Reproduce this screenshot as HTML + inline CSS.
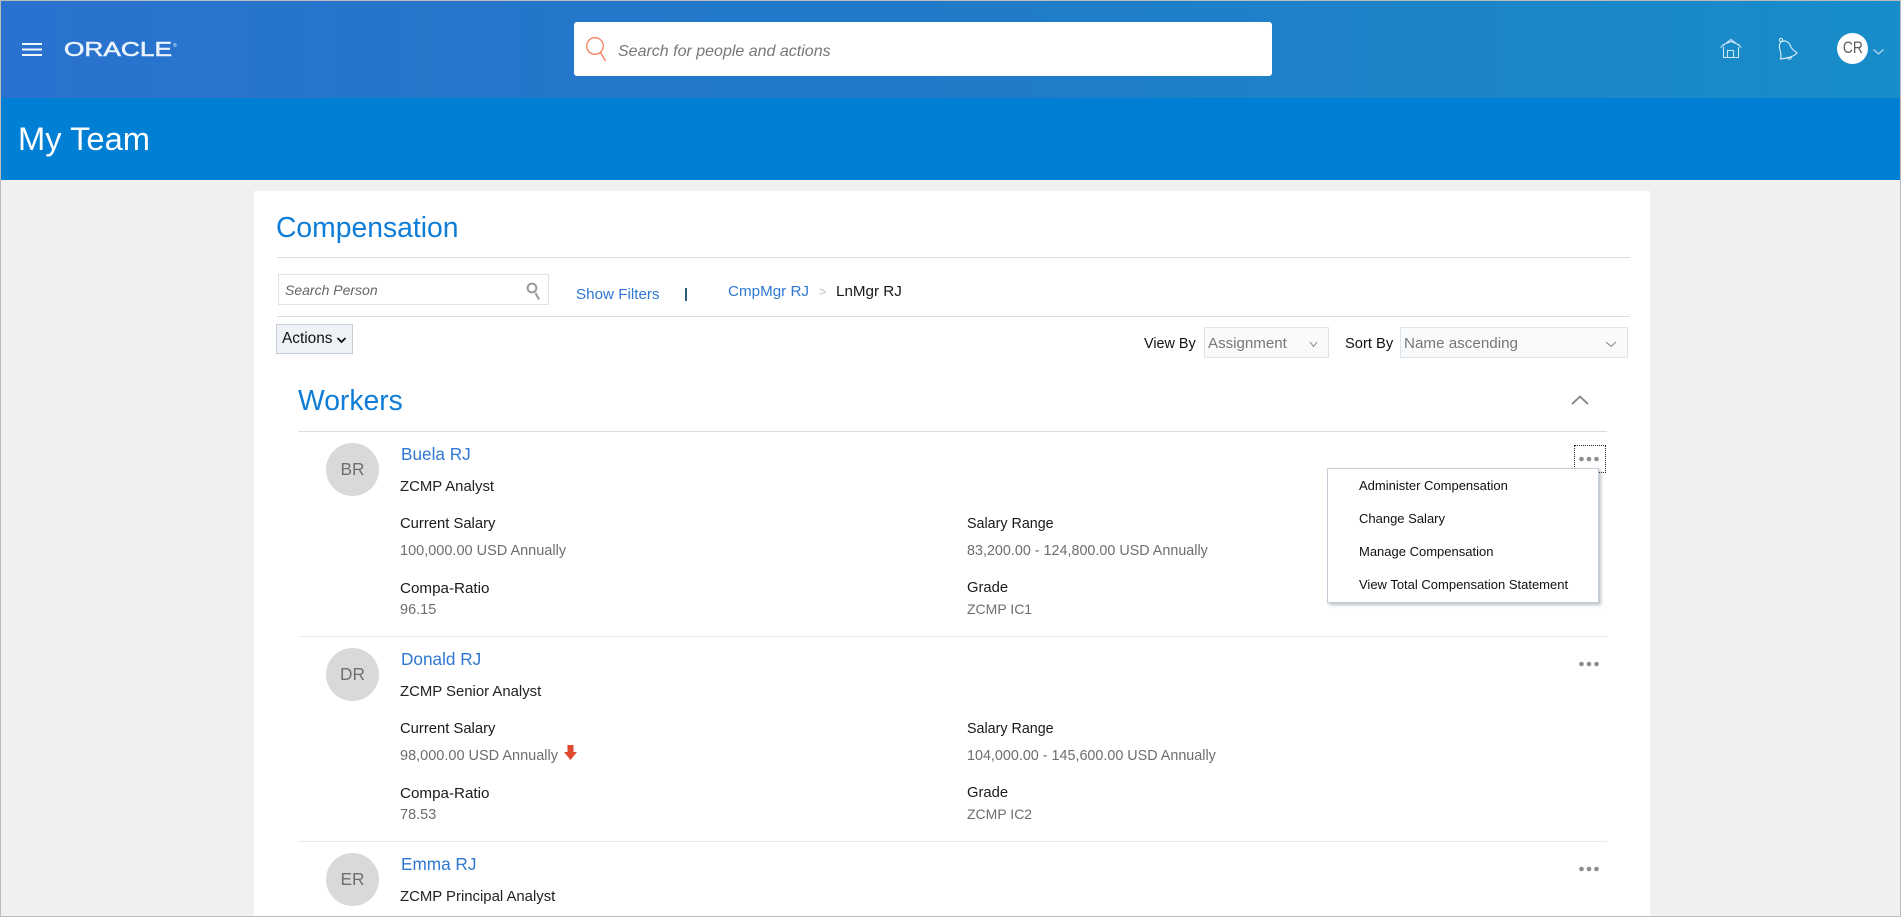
<!DOCTYPE html>
<html lang="en"><head><meta charset="utf-8"><title>My Team</title>
<style>
html,body{margin:0;padding:0;background:#f0f0f0}
body{width:1901px;height:917px;position:relative;overflow:hidden;font-family:"Liberation Sans",sans-serif;color:#222}
.a{position:absolute}
.t{position:absolute;white-space:nowrap;line-height:20px;font-size:14.9px}
.l{color:#1a1a1a;font-size:14.8px}
.v{color:#6e6e6e;font-size:14.5px}
.n{color:#2f78d2;font-size:17.2px}
.h{color:#0f7dd8;font-size:28.3px;line-height:34px}
.hr{position:absolute;height:1px}
.av{position:absolute;left:326px;width:53px;height:53px;border-radius:50%;background:#d9d9d9;color:#6f6f6f;font-size:17.3px;display:flex;align-items:center;justify-content:center}
.m{font-size:13px;color:#111}
.sel{position:absolute;top:327px;height:29px;background:#f8fafc;border:1px solid #dfe4e9;box-sizing:content-box}
</style></head><body>

<div class="a" style="left:0;top:0;width:1901px;height:98px;background:linear-gradient(90deg,#2a72cf 0%,#2179c9 45%,#188dc9 100%)"></div>
<div class="a" style="left:0;top:98px;width:1901px;height:82px;background:#0080d4"></div>
<div class="t" style="left:18px;top:120px;font-size:32.7px;line-height:38px;color:#fff">My Team</div>

<svg class="a" style="left:60px;top:36px" width="122" height="26"><text x="4" y="20" textLength="108" lengthAdjust="spacingAndGlyphs" font-family="Liberation Sans" font-size="20" fill="#eaf3fb" stroke="#eaf3fb" stroke-width=".55">ORACLE</text><text x="113" y="11" font-family="Liberation Sans" font-size="5" fill="#eaf3fb">®</text></svg>

<div class="a" style="left:574px;top:22px;width:698px;height:54px;background:#fff;border-radius:3px"></div>
<div class="t" style="left:618px;top:42px;font-size:16px;font-style:italic;color:#777">Search for people and actions</div>

<div class="a" style="left:1837px;top:33px;width:31px;height:31px;border-radius:50%;background:#fff;color:#5f5f5f;font-size:16.5px;display:flex;align-items:center;justify-content:center"><span style="display:inline-block;transform:scaleX(.84)">CR</span></div>

<div class="a" style="left:254px;top:191px;width:1396px;height:726px;background:#fff"></div>

<div class="t h" style="left:276px;top:210px">Compensation</div>
<div class="hr" style="left:277px;top:257px;width:1353px;background:#d6dde3"></div>

<div class="a" style="left:278px;top:274px;width:269px;height:29px;border:1px solid #e0e4e8;background:#fff;box-sizing:content-box"></div>
<div class="t" style="left:285px;top:280px;font-size:14px;font-style:italic;color:#666">Search Person</div>
<div class="t" style="left:576px;top:285px;font-size:15.2px;color:#2f78d2">Show Filters</div>
<div class="a" style="left:685px;top:288px;width:1.5px;height:13px;background:#2b5a78"></div>
<div class="t" style="left:728px;top:282px;font-size:15.2px;color:#2f78d2">CmpMgr RJ</div>
<div class="t" style="left:819px;top:282px;font-size:13px;color:#c4c4c4">&gt;</div>
<div class="t" style="left:836px;top:282px;font-size:15.2px;color:#1a1a1a">LnMgr RJ</div>
<div class="hr" style="left:277px;top:316px;width:1353px;background:#d6dde3"></div>

<div class="a" style="left:276px;top:324px;width:75px;height:28px;background:#eef2f6;border:1px solid #c4ced7"></div>
<div class="t" style="left:282px;top:329px;font-size:15.4px;color:#111">Actions</div>

<div class="t" style="left:1144px;top:334px;font-size:14.4px;color:#111">View By</div>
<div class="sel" style="left:1204px;width:123px"></div>
<div class="t" style="left:1208px;top:334px;font-size:15.1px;color:#777">Assignment</div>
<div class="t" style="left:1345px;top:334px;font-size:14.7px;color:#111">Sort By</div>
<div class="sel" style="left:1400px;width:226px"></div>
<div class="t" style="left:1404px;top:334px;font-size:15.2px;color:#777">Name ascending</div>

<div class="t h" style="left:298px;top:383px">Workers</div>
<div class="hr" style="left:298px;top:431px;width:1309px;background:#d6dde3"></div>

<div class="av" style="top:443px">BR</div>
<div class="t n" style="left:401px;top:444px">Buela RJ</div>
<div class="t" style="left:400px;top:477px">ZCMP Analyst</div>
<div class="t l" style="left:400px;top:514px">Current Salary</div>
<div class="t v" style="left:400px;top:541px">100,000.00 USD Annually</div>
<div class="t l" style="left:400px;top:579px;font-size:15.2px">Compa-Ratio</div>
<div class="t v" style="left:400px;top:600px">96.15</div>
<div class="t l" style="left:967px;top:514px;font-size:14.3px">Salary Range</div>
<div class="t v" style="left:967px;top:541px;font-size:14.35px">83,200.00 - 124,800.00 USD Annually</div>
<div class="t l" style="left:967px;top:578px">Grade</div>
<div class="t v" style="left:967px;top:599px;font-size:14px">ZCMP IC1</div>
<div class="hr" style="left:298px;top:636px;width:1309px;background:#e8ebee"></div>

<div class="av" style="top:648px">DR</div>
<div class="t n" style="left:401px;top:649px">Donald RJ</div>
<div class="t" style="left:400px;top:682px">ZCMP Senior Analyst</div>
<div class="t l" style="left:400px;top:719px">Current Salary</div>
<div class="t v" style="left:400px;top:746px">98,000.00 USD Annually</div>
<div class="t l" style="left:400px;top:784px;font-size:15.2px">Compa-Ratio</div>
<div class="t v" style="left:400px;top:805px">78.53</div>
<div class="t l" style="left:967px;top:719px;font-size:14.3px">Salary Range</div>
<div class="t v" style="left:967px;top:746px;font-size:14.35px">104,000.00 - 145,600.00 USD Annually</div>
<div class="t l" style="left:967px;top:783px">Grade</div>
<div class="t v" style="left:967px;top:804px;font-size:14px">ZCMP IC2</div>
<div class="hr" style="left:298px;top:841px;width:1309px;background:#e8ebee"></div>

<div class="av" style="top:853px">ER</div>
<div class="t n" style="left:401px;top:854px">Emma RJ</div>
<div class="t" style="left:400px;top:887px">ZCMP Principal Analyst</div>

<div class="a" style="left:1574px;top:445px;width:30px;height:26px;border:1px dotted #222"></div>
<div class="a" style="left:1327px;top:468px;width:270px;height:133px;background:#fff;border:1px solid #c3ced8;box-shadow:2px 2px 3px rgba(90,100,110,.4)"></div>
<div class="t m" style="left:1359px;top:476px">Administer Compensation</div>
<div class="t m" style="left:1359px;top:509px">Change Salary</div>
<div class="t m" style="left:1359px;top:542px">Manage Compensation</div>
<div class="t m" style="left:1359px;top:575px">View Total Compensation Statement</div>

<svg class="a" style="left:0;top:0" width="1901" height="917" fill="none">
  <path d="M22 44H42M22 49.5H42M22 55H42" stroke="#f2f7fd" stroke-width="1.9"/>
  <circle cx="595" cy="46" r="8.3" stroke="#f57f5b" stroke-width="1.3"/>
  <path d="M600.5 52.5L605.5 61" stroke="#f57f5b" stroke-width="1.4"/>
  <path d="M1720.5 47.5L1731 39.5L1741.5 47.5M1722.5 45L1731 41.5L1739.5 45" stroke="#cfe8f7" stroke-width="1.1"/>
  <path d="M1723.5 47V57.5H1738.5V47M1727.5 57.5V50.5H1733.5V57.5" stroke="#cfe8f7" stroke-width="1.1"/>
  <path d="M1781 42C1785 39.5 1789 42 1790.5 46C1791.5 49.5 1794.5 50.5 1797 53C1795 56 1787 58.5 1780.5 59C1781.5 56 1781 53 1780 50C1779 46.5 1779 44 1781 42Z" stroke="#e2f1fa" stroke-width="1.1"/>
  <circle cx="1781" cy="40" r="1.6" stroke="#e2f1fa" stroke-width="1"/>
  <path d="M1787 57.5A2.3 2.3 0 0 0 1791.5 56" stroke="#e2f1fa" stroke-width="1"/>
  <path d="M1873.5 49.5L1878.5 54L1883.5 49.5" stroke="#b8dcf0" stroke-width="1.2"/>
  <circle cx="532" cy="288" r="4.4" stroke="#999" stroke-width="2"/>
  <path d="M535.5 293L539 299.5" stroke="#999" stroke-width="2"/>
  <path d="M337.5 338L341.5 342L345.5 338" stroke="#111" stroke-width="1.7"/>
  <path d="M1310 342L1313.5 346.5L1317 342" stroke="#999" stroke-width="1.2"/>
  <path d="M1606 342L1611 346.5L1616 342" stroke="#999" stroke-width="1.2"/>
  <path d="M1572 404L1580 396.5L1588 404" stroke="#8a8a8a" stroke-width="1.9"/>
  <g fill="#8d8d8d">
    <circle cx="1581.5" cy="459" r="2.3"/><circle cx="1589" cy="459" r="2.3"/><circle cx="1596.5" cy="459" r="2.3"/>
    <circle cx="1581.5" cy="664" r="2.3"/><circle cx="1589" cy="664" r="2.3"/><circle cx="1596.5" cy="664" r="2.3"/>
    <circle cx="1581.5" cy="869" r="2.3"/><circle cx="1589" cy="869" r="2.3"/><circle cx="1596.5" cy="869" r="2.3"/>
  </g>
  <path d="M567.5 745H573.5V752H577L570.5 760L564 752H567.5Z" fill="#e0492e"/>
</svg>

<div class="a" style="left:0;top:0;width:1899px;height:915px;border:1px solid #bcbcbc"></div>
</body></html>
